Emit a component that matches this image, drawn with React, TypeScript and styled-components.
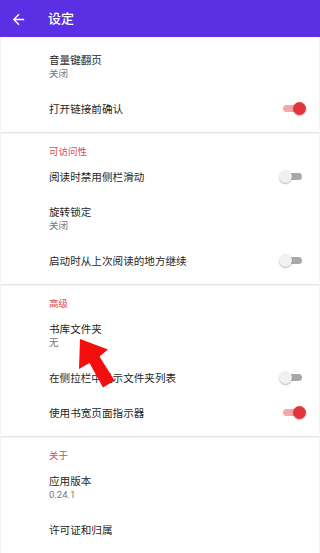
import React from "react";
import styled, { createGlobalStyle } from "styled-components";

const GlobalStyle = createGlobalStyle`
  html, body { margin: 0; padding: 0; background: #ffffff; }
  body { font-family: Roboto, "Noto Sans CJK SC", "Noto Sans", sans-serif; }
  * { box-sizing: border-box; }
`;

const Page = styled.div`
  position: relative;
  width: 320px;
  height: 553px;
  overflow: hidden;
  background: #ffffff;
`;

const AppBar = styled.header`
  height: 37px;
  background: #5b2fe3;
  display: flex;
  align-items: center;
  padding-left: 10px;
  color: #ffffff;
`;

const BackIcon = styled.svg`
  width: 17px;
  height: 17px;
  fill: #ffffff;
  margin-right: 21px;
  margin-top: 1px;
`;

const Title = styled.h1`
  margin: 0;
  font-size: 13px;
  font-weight: 500;
  line-height: 16px;
  letter-spacing: 0;
  margin-top: 1px;
`;

const Content = styled.div`
  border-left: 1px solid #f3f3f3;
  border-right: 1px solid #f5f5f5;
`;

const Section = styled.section<{ $top?: number }>`
  padding-top: ${(p) => p.$top ?? 0}px;
  padding-bottom: 5px;
`;

const Divider = styled.div`
  height: 1px;
  background: #e3e3e3;
  box-shadow: 0 1px 0 #f4f4f4;
`;

const SectionHeader = styled.div`
  padding: 12px 0 2px 48px;
  font-size: 9.5px;
  line-height: 13px;
  color: #e5484d;
`;

const Row = styled.div`
  display: flex;
  align-items: center;
  padding: 11px 13px 11px 48px;
`;

const RowText = styled.div`
  flex: 1;
  min-width: 0;
`;

const RowTitle = styled.div`
  font-size: 10.6px;
  line-height: 13px;
  color: #1f1f1f;
`;

const RowSummary = styled.div`
  font-size: 9.5px;
  line-height: 14px;
  color: #757575;
`;

const Switch = styled.div<{ $on: boolean }>`
  position: relative;
  width: 27px;
  height: 13px;
  margin-top: -2px;
  flex: none;

  &::before {
    content: "";
    position: absolute;
    left: 4px;
    right: 4px;
    top: 3px;
    height: 7px;
    border-radius: 4px;
    background: ${(p) => (p.$on ? "#f6a6ab" : "#a9a9a9")};
  }

  &::after {
    content: "";
    position: absolute;
    top: 0;
    left: ${(p) => (p.$on ? "14px" : "0px")};
    width: 13px;
    height: 13px;
    border-radius: 50%;
    background: ${(p) => (p.$on ? "#e5353b" : "#f1f1f1")};
    box-shadow: 0 1px 1.5px rgba(0, 0, 0, 0.28);
  }
`;

const Pointer = styled.svg`
  position: absolute;
  left: 0;
  top: 0;
  width: 320px;
  height: 553px;
  pointer-events: none;
`;

type Item = { title: string; summary?: string; toggle?: boolean };

const sections: { header?: string; top?: number; items: Item[] }[] = [
  {
    top: 6,
    items: [
      { title: "音量键翻页", summary: "关闭" },
      { title: "打开链接前确认", toggle: true },
    ],
  },
  {
    header: "可访问性",
    items: [
      { title: "阅读时禁用侧栏滑动", toggle: false },
      { title: "旋转锁定", summary: "关闭" },
      { title: "启动时从上次阅读的地方继续", toggle: false },
    ],
  },
  {
    header: "高级",
    items: [
      { title: "书库文件夹", summary: "无" },
      { title: "在侧拉栏中显示文件夹列表", toggle: false },
      { title: "使用书宽页面指示器", toggle: true },
    ],
  },
  {
    header: "关于",
    items: [
      { title: "应用版本", summary: "0.24.1" },
      { title: "许可证和归属" },
    ],
  },
];

export default function App() {
  return (
    <Page>
      <GlobalStyle />
      <AppBar>
        <BackIcon viewBox="0 0 24 24">
          <path d="M20 11H7.83l5.59-5.59L12 4l-8 8 8 8 1.41-1.41L7.83 13H20v-2z" />
        </BackIcon>
        <Title>设定</Title>
      </AppBar>
      <Content>
        {sections.map((s, i) => (
          <React.Fragment key={i}>
            {i > 0 && <Divider />}
            <Section $top={s.top}>
              {s.header && <SectionHeader>{s.header}</SectionHeader>}
              {s.items.map((it) => (
                <Row key={it.title}>
                  <RowText>
                    <RowTitle>{it.title}</RowTitle>
                    {it.summary && <RowSummary>{it.summary}</RowSummary>}
                  </RowText>
                  {it.toggle !== undefined && <Switch $on={it.toggle} />}
                </Row>
              ))}
            </Section>
          </React.Fragment>
        ))}
      </Content>
      <Pointer viewBox="0 0 320 553">
        <polygon
          points="80,339 79,369 89.5,363 103,387.5 114.5,380.5 99.5,356.5 108,349.5"
          fill="#f30d0d"
        />
      </Pointer>
    </Page>
  );
}
